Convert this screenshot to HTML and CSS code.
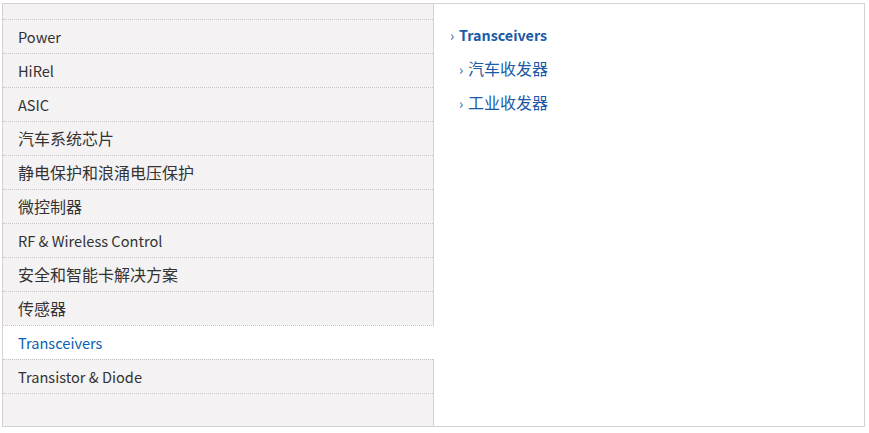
FILE: index.html
```html
<!DOCTYPE html>
<html lang="zh-CN">
<head>
<meta charset="utf-8">
<link rel="stylesheet" href="styles.css">
</head>
<body>
<div class="box">
  <ul class="menu">
    <li class="item en">Power</li>
    <li class="item en">HiRel</li>
    <li class="item en">ASIC</li>
    <li class="item">汽车系统芯片</li>
    <li class="item">静电保护和浪涌电压保护</li>
    <li class="item">微控制器</li>
    <li class="item en">RF &amp; Wireless Control</li>
    <li class="item">安全和智能卡解决方案</li>
    <li class="item">传感器</li>
    <li class="item en active">Transceivers</li>
    <li class="item en">Transistor &amp; Diode</li>
  </ul>
  <div class="detail">
    <div class="head en"><span class="chev">›</span>Transceivers</div>
    <div class="sub"><span class="chev">›</span>汽车收发器</div>
    <div class="sub"><span class="chev">›</span>工业收发器</div>
  </div>
</div>
</body>
</html>
```
FILE: styles.css
```css
html, body {
  margin: 0;
  padding: 0;
  background: #fff;
}
body {
  padding: 3px 0 0 2px;
  font-family: "Noto Sans CJK SC", "Noto Sans", sans-serif;
  font-size: 16px;
}
.box {
  width: 861px;
  height: 422px;
  border: 1px solid #d6d2d2;
  display: flex;
}
.menu {
  list-style: none;
  margin: 0;
  padding: 15px 0 0 0;
  width: 430px;
  background: #f4f2f3;
  border-right: 1px solid #d6d2d2;
  flex: none;
}
.item {
  border-top: 1px dotted #c8c4c4;
  height: 33px;
  line-height: 33px;
  padding-left: 15px;
  color: #333;
}
.en {
  font-size: 14.6px;
}
.item:last-child {
  border-bottom: 1px dotted #c8c4c4;
}
.item.active {
  background: #fff;
  color: #0d5fb2;
  margin-right: -1px;
  position: relative;
}
.detail {
  padding: 14px 0 0 16px;
  flex: 1;
}
.head, .sub {
  height: 34px;
  line-height: 34px;
  color: #1a5aa6;
}
.head {
  font-weight: bold;
  font-size: 14.3px;
}
.sub {
  padding-left: 9px;
  line-height: 32px;
}
.chev {
  display: inline-block;
  width: 9px;
  font-weight: normal;
  font-size: 14px;
}
```
